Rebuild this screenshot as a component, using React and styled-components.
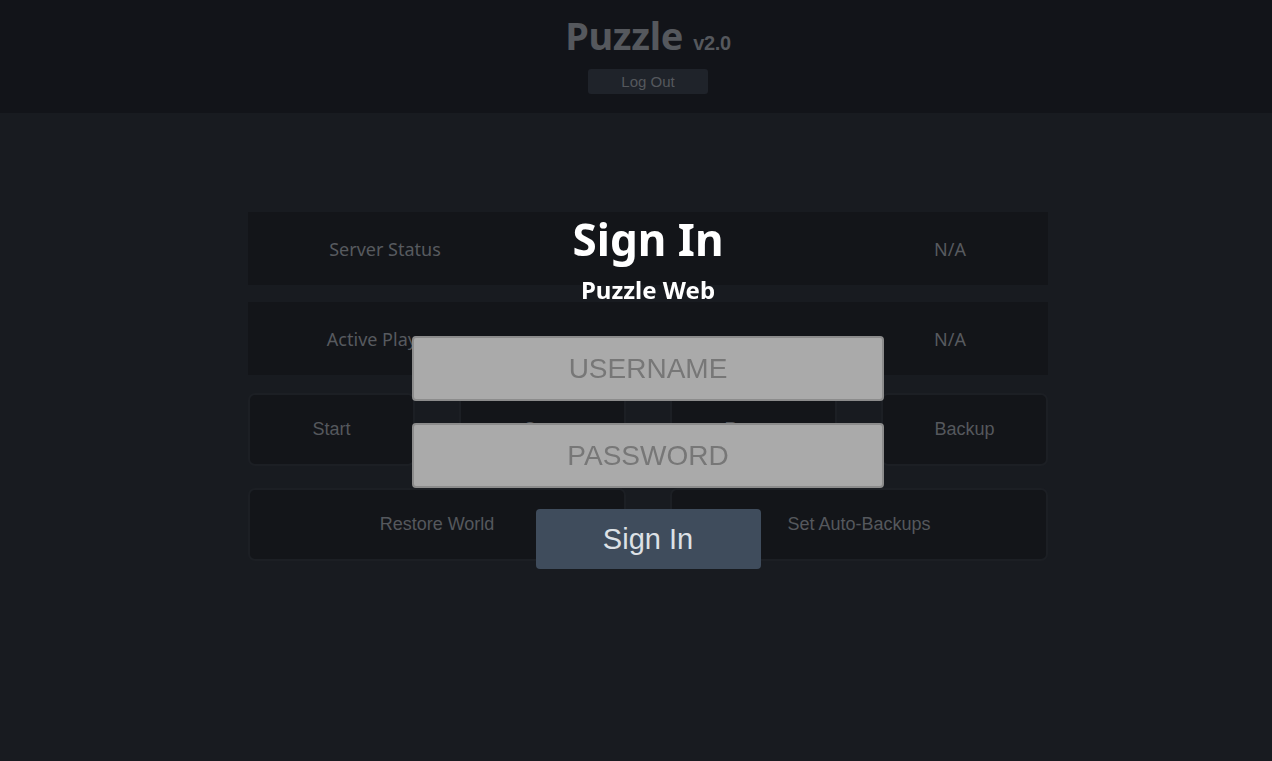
import React from 'react';
import styled, { createGlobalStyle } from 'styled-components';

const GlobalStyle = createGlobalStyle`
  html, body {
    margin: 0;
    padding: 0;
    background: #181b20;
    height: 100%;
    overflow: hidden;
  }
`;

const Page = styled.div`
  height: 100vh;
  padding-left: 24px;
  box-sizing: border-box;
  background: #181b20;
  font-family: 'Noto Sans', 'Open Sans', sans-serif;
`;

const Header = styled.header`
  height: 113px;
  margin-left: -24px;
  padding: 11px 0 0 24px;
  background: #121419;
  display: flex;
  flex-direction: column;
  align-items: center;
  box-sizing: border-box;
`;

const Title = styled.h1`
  margin: 0;
  font-size: 38px;
  line-height: 48px;
  font-weight: 700;
  color: #55585d;
  letter-spacing: -0.3px;
`;

const Version = styled.span`
  font-family: 'Liberation Sans', Arial, sans-serif;
  font-size: 20px;
  font-weight: 700;
  margin-left: 10px;
`;

const LogOut = styled.button`
  margin-top: 2px;
  width: 120px;
  height: 25px;
  border: none;
  border-radius: 3px;
  background: #1f232a;
  color: #55585d;
  font-family: 'Liberation Sans', Arial, sans-serif;
  font-size: 15px;
`;

const Dashboard = styled.main`
  width: 800px;
  margin: 99px auto 0;
  display: flex;
  flex-direction: column;
  gap: 17px;
`;

const InfoCard = styled.div`
  height: 73px;
  background: #131519;
  display: grid;
  grid-template-columns: 274px 1fr 196px;
  align-items: center;
  justify-items: center;
  font-size: 18px;
  color: #575a5f;
`;

const ButtonRow = styled.div`
  display: grid;
  grid-template-columns: repeat(${p => p.$cols}, 1fr);
  column-gap: 44px;
  margin-top: ${p => p.$top || 0}px;
`;

const PanelButton = styled.button`
  height: 73px;
  background: #131519;
  border: 2px solid #1c1f24;
  border-radius: 7px;
  color: #55585d;
  font-family: 'Liberation Sans', Arial, sans-serif;
  font-size: 18px;
`;

const Overlay = styled.div`
  position: fixed;
  inset: 0;
  display: flex;
  flex-direction: column;
  align-items: center;
  padding: 211px 0 0 24px;
  box-sizing: border-box;
`;

const ModalTitle = styled.h2`
  margin: 0;
  font-size: 44px;
  line-height: 56px;
  font-weight: 700;
  color: #ffffff;
`;

const ModalSub = styled.h3`
  margin: 8px 0 0;
  font-size: 24px;
  line-height: 30px;
  font-weight: 700;
  color: #ffffff;
`;

const Form = styled.form`
  display: flex;
  flex-direction: column;
  align-items: center;
  margin-top: 31px;
  gap: 22px;
`;

const Field = styled.input`
  width: 472px;
  height: 65px;
  box-sizing: border-box;
  background: #aaaaaa;
  border: 2px solid #8c8c8c;
  border-radius: 4px;
  text-align: center;
  font-family: 'Liberation Sans', Arial, sans-serif;
  font-size: 28px;
  color: #333;
  outline: none;
  &::placeholder {
    color: #777777;
  }
`;

const Submit = styled.button`
  margin-top: -1px;
  width: 225px;
  height: 60px;
  border: none;
  border-radius: 4px;
  background: #3f4c5c;
  color: #dde1e6;
  font-family: 'Liberation Sans', Arial, sans-serif;
  font-size: 29px;
`;

export default function App() {
  return (
    <Page>
      <GlobalStyle />
      <Header>
        <Title>Puzzle<Version>v2.0</Version></Title>
        <LogOut>Log Out</LogOut>
      </Header>
      <Dashboard>
        <InfoCard>
          <span>Server Status</span>
          <span />
          <span>N/A</span>
        </InfoCard>
        <InfoCard>
          <span>Active Players</span>
          <span />
          <span>N/A</span>
        </InfoCard>
        <ButtonRow $cols={4} $top={1}>
          <PanelButton>Start</PanelButton>
          <PanelButton>Stop</PanelButton>
          <PanelButton>Restart</PanelButton>
          <PanelButton>Backup</PanelButton>
        </ButtonRow>
        <ButtonRow $cols={2} $top={5}>
          <PanelButton>Restore World</PanelButton>
          <PanelButton>Set Auto-Backups</PanelButton>
        </ButtonRow>
      </Dashboard>
      <Overlay>
        <ModalTitle>Sign In</ModalTitle>
        <ModalSub>Puzzle Web</ModalSub>
        <Form onSubmit={e => e.preventDefault()}>
          <Field type="text" placeholder="USERNAME" />
          <Field type="password" placeholder="PASSWORD" />
          <Submit type="submit">Sign In</Submit>
        </Form>
      </Overlay>
    </Page>
  );
}
